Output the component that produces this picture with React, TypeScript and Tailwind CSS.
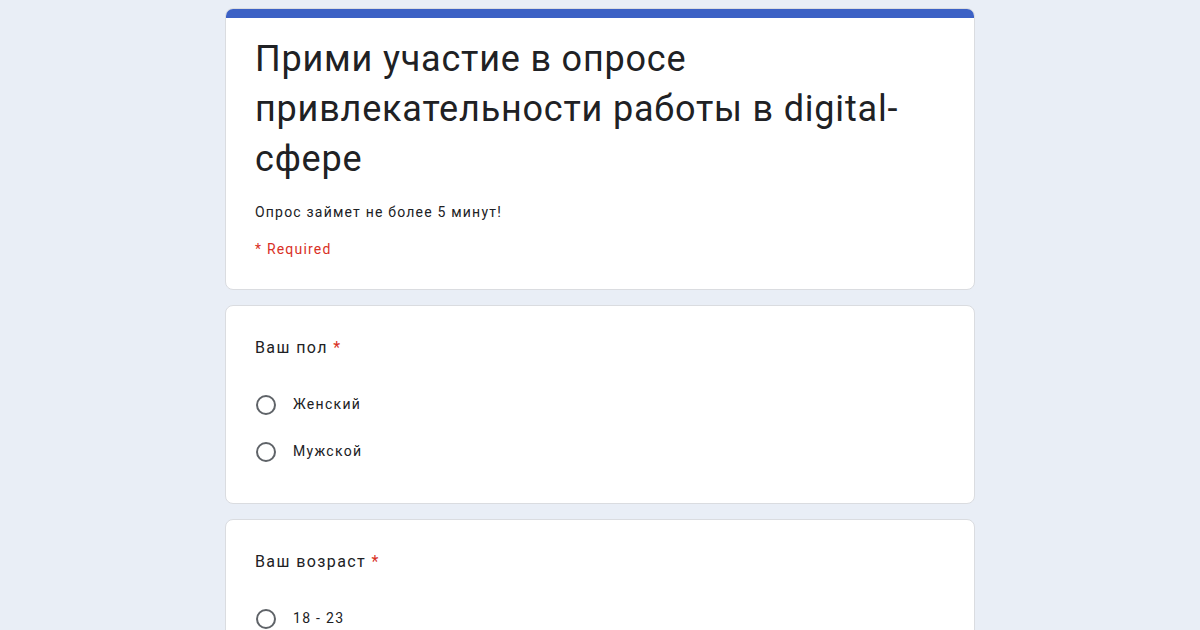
import React from "react";

const font = { fontFamily: "Roboto, 'Noto Sans', sans-serif" };

function Radio({ label }: { label: string }) {
  return (
    <div className="flex items-center gap-[7px] h-[47px]">
      <div className="h-[20px] w-[20px] rounded-full border-2 border-[#5f6368] ml-[1px] mr-[10px]" />
      <span className="text-[14px] text-[#202124] tracking-[1.3px]">{label}</span>
    </div>
  );
}

function Question({ title, options }: { title: string; options: string[] }) {
  return (
    <div className="rounded-lg border border-[#dadce0] bg-white px-[29px] pt-[30px] pb-[28px]">
      <div className="text-[16px] text-[#202124] leading-[24px] tracking-[1.4px]">
        {title} <span className="text-[#d93025]">*</span>
      </div>
      <div className="mt-[21px]">
        {options.map((o) => (
          <Radio key={o} label={o} />
        ))}
      </div>
    </div>
  );
}

export default function App() {
  return (
    <div className="min-h-screen w-full bg-[#e9eef6] overflow-hidden" style={font}>
      <div className="mx-auto w-[750px] pt-[8px] flex flex-col gap-[15px]">
        <div className="rounded-lg border border-[#dadce0] bg-white overflow-hidden">
          <div className="h-[10px] bg-[#3c61c5] -mx-px -mt-px" />
          <div className="px-[29px] pt-[16px] pb-[30px]">
            <h1 className="text-[36px] leading-[50px] text-[#202124] font-normal tracking-[0.8px]">
              Прими участие в опросе привлекательности работы в digital-сфере
            </h1>
            <p className="mt-[18px] text-[14px] leading-[20px] text-[#202124] tracking-[1.2px]">Опрос займет не более 5 минут!</p>
            <p className="mt-[17px] text-[14px] leading-[20px] text-[#d93025] tracking-[1.2px]">* Required</p>
          </div>
        </div>
        <Question title="Ваш пол" options={["Женский", "Мужской"]} />
        <Question title="Ваш возраст" options={["18 - 23"]} />
      </div>
    </div>
  );
}
